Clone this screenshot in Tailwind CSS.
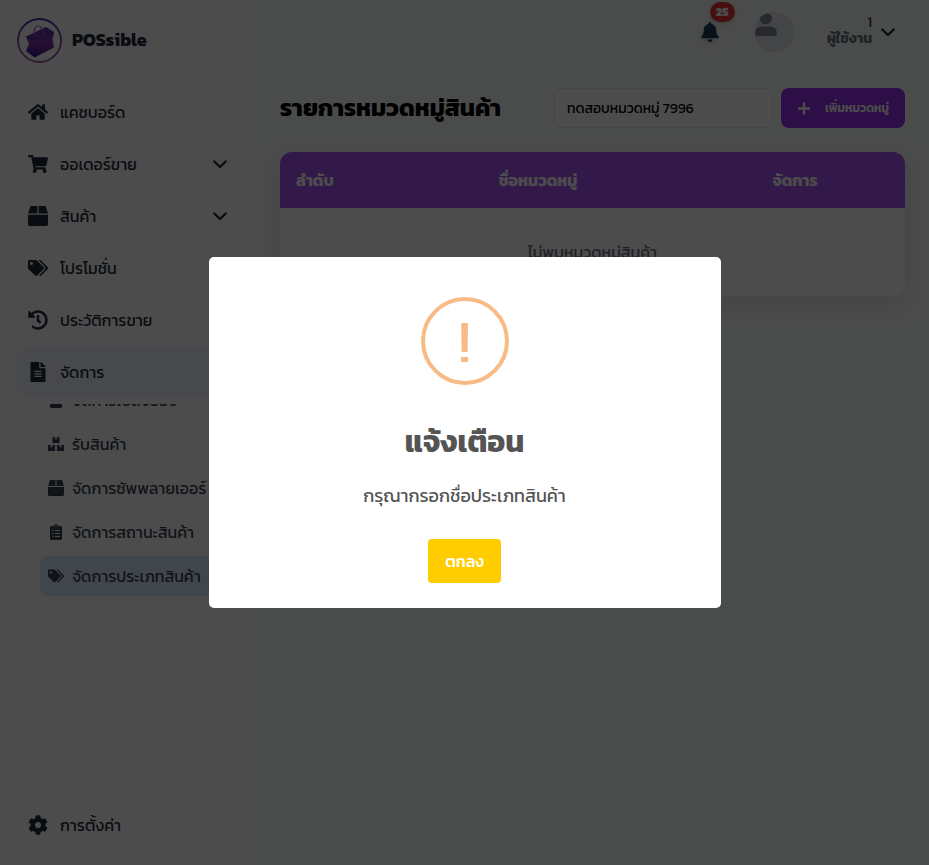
<!DOCTYPE html>
<html lang="th">
<head>
<meta charset="utf-8">
<title>POSsible</title>
<script src="https://cdn.jsdelivr.net/npm/@tailwindcss/browser@4"></script>
</head>
<body class="h-[865px] w-[929px] overflow-hidden font-['Kanit','Open_Sans','Noto_Sans',sans-serif] text-base text-gray-800">
<svg class="hidden">
  <symbol id="home" viewBox="0 0 576 512"><path d="M280.37 148.26L96 300.11V464a16 16 0 0 0 16 16l112.06-.29a16 16 0 0 0 15.92-16V368a16 16 0 0 1 16-16h64a16 16 0 0 1 16 16v95.64a16 16 0 0 0 16 16.05L464 480a16 16 0 0 0 16-16V300L295.67 148.26a12.19 12.19 0 0 0-15.3 0zM571.6 251.47L488 182.56V44.05a12 12 0 0 0-12-12h-56a12 12 0 0 0-12 12v72.61L318.47 43a48 48 0 0 0-61 0L4.34 251.47a12 12 0 0 0-1.6 16.9l25.5 31A12 12 0 0 0 45.15 301l235.22-193.74a12.19 12.19 0 0 1 15.3 0L530.9 301a12 12 0 0 0 16.9-1.6l25.5-31a12 12 0 0 0-1.7-16.93z"/></symbol>
  <symbol id="cart" viewBox="0 0 576 512"><path d="M528.12 301.319l47.273-208C578.806 78.301 567.391 64 551.99 64H159.208l-9.166-44.81C147.758 8.021 137.93 0 126.529 0H24C10.745 0 0 10.745 0 24v16c0 13.255 10.745 24 24 24h69.883l70.248 343.435C147.325 417.1 136 435.222 136 456c0 30.928 25.072 56 56 56s56-25.072 56-56c0-15.674-6.447-29.835-16.824-40h209.647C430.447 426.165 424 440.326 424 456c0 30.928 25.072 56 56 56s56-25.072 56-56c0-22.172-12.888-41.332-31.579-50.405l5.517-24.276c3.413-15.018-8.002-29.319-23.403-29.319H218.117l-6.545-32h293.145c11.206 0 20.92-7.754 23.403-18.681z"/></symbol>
  <symbol id="box" viewBox="0 0 512 512"><path d="M509.5 184.6L458.9 32.8C452.4 13.2 434.1 0 413.4 0H272v192h238.7c-.4-2.5-.4-5-1.2-7.4zM240 0H98.6c-20.7 0-39 13.2-45.5 32.8L2.5 184.6c-.8 2.4-.8 4.9-1.2 7.4H240V0zM0 224v240c0 26.5 21.5 48 48 48h416c26.5 0 48-21.5 48-48V224H0z"/></symbol>
  <symbol id="tags" viewBox="0 0 640 512"><path d="M497.941 225.941L286.059 14.059A48 48 0 0 0 252.118 0H48C21.49 0 0 21.49 0 48v204.118a48 48 0 0 0 14.059 33.941l211.882 211.882c18.744 18.745 49.136 18.746 67.882 0l204.118-204.118c18.745-18.745 18.745-49.137 0-67.882zM112 160c-26.51 0-48-21.49-48-48s21.49-48 48-48 48 21.49 48 48-21.49 48-48 48zm513.941 133.823L421.823 497.941c-18.745 18.745-49.137 18.745-67.882 0l-.36-.36L527.64 323.522c16.999-16.999 26.36-39.6 26.36-63.64s-9.362-46.641-26.36-63.64L331.397 0h48.721a48 48 0 0 1 33.941 14.059l211.882 211.882c18.745 18.745 18.745 49.137 0 67.882z"/></symbol>
  <symbol id="history" viewBox="0 0 512 512"><path d="M504 255.531c.253 136.64-111.18 248.372-247.82 248.468-59.015.042-113.223-20.53-155.822-54.911-11.077-8.94-11.905-25.541-1.839-35.607l11.267-11.267c8.609-8.609 22.353-9.551 31.891-1.984C173.062 425.135 212.781 440 256 440c101.705 0 184-82.311 184-184 0-101.705-82.311-184-184-184-48.814 0-93.149 18.969-126.068 49.932l50.754 50.754c10.08 10.08 2.941 27.314-11.313 27.314H24c-8.837 0-16-7.163-16-16V38.627c0-14.254 17.234-21.393 27.314-11.314l49.372 49.372C129.209 34.136 189.552 8 256 8c136.81 0 247.747 110.78 248 247.531zm-180.912 78.784l9.823-12.63c8.138-10.463 6.253-25.542-4.21-33.679L288 256.349V152c0-13.255-10.745-24-24-24h-16c-13.255 0-24 10.745-24 24v135.651l65.409 50.874c10.463 8.137 25.541 6.253 33.679-4.21z"/></symbol>
  <symbol id="file" viewBox="0 0 384 512"><path d="M224 136V0H24C10.7 0 0 10.7 0 24v464c0 13.3 10.7 24 24 24h336c13.3 0 24-10.7 24-24V160H248c-13.2 0-24-10.8-24-24zm64 236c0 6.6-5.4 12-12 12H108c-6.6 0-12-5.4-12-12v-8c0-6.6 5.4-12 12-12h168c6.6 0 12 5.4 12 12v8zm0-64c0 6.6-5.4 12-12 12H108c-6.6 0-12-5.4-12-12v-8c0-6.6 5.4-12 12-12h168c6.6 0 12 5.4 12 12v8zm0-72v8c0 6.6-5.4 12-12 12H108c-6.6 0-12-5.4-12-12v-8c0-6.6 5.4-12 12-12h168c6.6 0 12 5.4 12 12zm96-114.1v6.1H256V0h6.1c6.4 0 12.5 2.5 17 7l97.9 98c4.5 4.5 7 10.6 7 16.9z"/></symbol>
  <symbol id="boxes" viewBox="0 0 576 512"><path d="M560 288h-80v96l-32-21.3-32 21.3v-96h-80c-8.8 0-16 7.2-16 16v192c0 8.8 7.2 16 16 16h224c8.8 0 16-7.2 16-16V304c0-8.8-7.2-16-16-16zm-384-64h224c8.8 0 16-7.2 16-16V16c0-8.8-7.2-16-16-16h-80v96l-32-21.3L256 96V0h-80c-8.8 0-16 7.2-16 16v192c0 8.8 7.2 16 16 16zm64 64h-80v96l-32-21.3L96 384v-96H16c-8.8 0-16 7.2-16 16v192c0 8.8 7.2 16 16 16h224c8.8 0 16-7.2 16-16V304c0-8.8-7.2-16-16-16z"/></symbol>
  <symbol id="clip" viewBox="0 0 384 512"><path d="M336 64h-80c0-35.3-28.7-64-64-64s-64 28.7-64 64H48C21.5 64 0 85.5 0 112v352c0 26.5 21.5 48 48 48h288c26.5 0 48-21.5 48-48V112c0-26.5-21.5-48-48-48zM96 424c-13.3 0-24-10.7-24-24s10.7-24 24-24 24 10.7 24 24-10.7 24-24 24zm0-96c-13.3 0-24-10.7-24-24s10.7-24 24-24 24 10.7 24 24-10.7 24-24 24zm0-96c-13.3 0-24-10.7-24-24s10.7-24 24-24 24 10.7 24 24-10.7 24-24 24zm96-192c13.3 0 24 10.7 24 24s-10.7 24-24 24-24-10.7-24-24 10.7-24 24-24zm128 368c0 4.4-3.6 8-8 8H168c-4.4 0-8-3.6-8-8v-16c0-4.4 3.6-8 8-8h144c4.4 0 8 3.6 8 8v16zm0-96c0 4.4-3.6 8-8 8H168c-4.4 0-8-3.6-8-8v-16c0-4.4 3.6-8 8-8h144c4.4 0 8 3.6 8 8v16zm0-96c0 4.4-3.6 8-8 8H168c-4.4 0-8-3.6-8-8v-16c0-4.4 3.6-8 8-8h144c4.4 0 8 3.6 8 8v16z"/></symbol>
  <symbol id="cog" viewBox="0 0 512 512"><path d="M487.4 315.7l-42.6-24.6c4.3-23.2 4.3-47 0-70.2l42.6-24.6c4.9-2.8 7.1-8.6 5.5-14-11.1-35.6-30-67.8-54.7-94.6-3.8-4.1-10-5.1-14.8-2.3L380.8 110c-17.9-15.4-38.5-27.3-60.8-35.1V25.8c0-5.6-3.9-10.5-9.4-11.7-36.7-8.2-74.3-7.8-109.2 0-5.5 1.2-9.4 6.1-9.4 11.7V75c-22.2 7.9-42.8 19.8-60.8 35.1L88.7 85.5c-4.9-2.8-11-1.9-14.8 2.3-24.7 26.7-43.6 58.9-54.7 94.6-1.7 5.4.6 11.2 5.5 14L67.3 221c-4.3 23.2-4.3 47 0 70.2l-42.6 24.6c-4.9 2.8-7.1 8.6-5.5 14 11.1 35.6 30 67.8 54.7 94.6 3.8 4.1 10 5.1 14.8 2.3l42.6-24.6c17.9 15.4 38.5 27.3 60.8 35.1v49.2c0 5.6 3.9 10.5 9.4 11.7 36.7 8.2 74.3 7.8 109.2 0 5.5-1.2 9.4-6.1 9.4-11.7v-49.2c22.2-7.9 42.8-19.8 60.8-35.1l42.6 24.6c4.9 2.8 11 1.9 14.8-2.3 24.7-26.7 43.6-58.9 54.7-94.6 1.5-5.5-.7-11.3-5.6-14.1zM256 336c-44.1 0-80-35.9-80-80s35.9-80 80-80 80 35.9 80 80-35.9 80-80 80z"/></symbol>
  <symbol id="bell" viewBox="0 0 448 512"><path d="M224 512c35.32 0 63.97-28.65 63.97-64H160.03c0 35.35 28.65 64 63.97 64zm215.39-149.71c-19.32-20.76-55.47-51.99-55.47-154.29 0-77.7-54.48-139.9-127.94-155.16V32c0-17.67-14.32-32-31.98-32s-31.98 14.33-31.98 32v20.84C118.56 68.1 64.08 130.3 64.08 208c0 102.3-36.15 133.53-55.47 154.29-6 6.45-8.66 14.16-8.61 21.71.11 16.4 12.98 32 32.1 32h383.8c19.12 0 32-15.6 32.1-32 .05-7.55-2.61-15.27-8.61-21.71z"/></symbol>
  <symbol id="chev" viewBox="0 0 14 9"><path d="M1.3 1.5 7 7l5.7-5.5" fill="none" stroke="currentColor" stroke-width="2.3" stroke-linecap="round" stroke-linejoin="round"/></symbol>
</svg>
<div class="flex h-full">
  <aside class="flex w-64 shrink-0 flex-col bg-white px-4">
    <div class="flex h-20 items-center gap-2.5">
      <svg class="ml-px size-[45px]" viewBox="0 0 45 45">
        <defs>
          <linearGradient id="ring" x1="0" y1="0" x2="0" y2="1"><stop offset="0" stop-color="#4c2fb0"/><stop offset="1" stop-color="#a858b0"/></linearGradient>
          <linearGradient id="bag" x1="0" y1="0" x2="0" y2="1"><stop offset="0" stop-color="#5a2ba8"/><stop offset=".5" stop-color="#8038a8"/><stop offset="1" stop-color="#32109a"/></linearGradient>
        </defs>
        <circle cx="22.5" cy="22.5" r="21.500" fill="none" stroke="url(#ring)" stroke-width="1.8"/>
        <path d="M9 18.5 29 9l8 5-1.5 7.500 1.500 8L17.500 39.500 9 33l3-7z" fill="url(#bag)"/>
        <path d="M9 18.5 17 21.500 37 14" fill="none" stroke="#4a1c90" stroke-width=".8"/>
        <path d="M17.5 17c-2-12 8-13 9.500 1" fill="none" stroke="#a060b0" stroke-width="1.2"/>
      </svg>
      <span class="text-lg font-bold">POSsible</span>
    </div>
    <nav class="flex flex-col gap-1 pt-2">
      <a class="flex h-12 items-center gap-3 pl-3"><svg class="size-5 fill-current"><use href="#home"/></svg>แคชบอร์ด</a>
      <a class="flex h-12 items-center gap-3 px-3"><svg class="size-5 fill-current"><use href="#cart"/></svg>ออเดอร์ขาย<svg class="mr-px ml-auto h-[9px] w-3.5"><use href="#chev"/></svg></a>
      <a class="flex h-12 items-center gap-3 px-3"><svg class="size-5 fill-current"><use href="#box"/></svg>สินค้า<svg class="mr-px ml-auto h-[9px] w-3.5"><use href="#chev"/></svg></a>
      <a class="flex h-12 items-center gap-3 pl-3"><svg class="size-5 fill-current"><use href="#tags"/></svg>โปรโมชั่น</a>
      <a class="flex h-12 items-center gap-3 pl-3"><svg class="size-5 fill-current"><use href="#history"/></svg>ประวัติการขาย</a>
      <a class="flex h-12 items-center gap-3 rounded-xl bg-blue-50 pl-3"><svg class="size-5 fill-current"><use href="#file"/></svg>จัดการ</a>
    </nav>
    <div class="mt-2 flex h-48 flex-col justify-end gap-1 overflow-hidden pl-6 text-gray-700">
      <a class="flex h-10 shrink-0 items-center gap-2 pl-2"><svg class="size-4 fill-current" viewBox="0 0 16 16"><path d="M3 0h10l1 1v14l-1 1H3l-1-1V1z"/></svg>จัดการเบิลจของ</a>
      <a class="flex h-10 shrink-0 items-center gap-2 pl-2"><svg class="size-4 fill-current"><use href="#boxes"/></svg>รับสินค้า</a>
      <a class="flex h-10 shrink-0 items-center gap-2 pl-2"><svg class="size-4 fill-current"><use href="#box"/></svg>จัดการซัพพลายเออร์</a>
      <a class="flex h-10 shrink-0 items-center gap-2 pl-2"><svg class="size-4 fill-current"><use href="#clip"/></svg>จัดการสถานะสินค้า</a>
      <a class="flex h-10 shrink-0 items-center gap-2 rounded-lg bg-blue-100 pl-2"><svg class="size-4 fill-current"><use href="#tags"/></svg>จัดการประเภทสินค้า</a>
    </div>
    <a class="mt-auto mb-4 flex h-12 items-center gap-3 pl-3"><svg class="size-5 fill-current"><use href="#cog"/></svg>การตั้งค่า</a>
  </aside>
  <main class="flex-1 bg-[#f8fdfa] px-6">
    <header class="flex h-16 items-center justify-end">
      <div class="relative mr-[35px] drop-shadow-md">
        <svg class="h-5 w-[18px] fill-[#1f3a5a]"><use href="#bell"/></svg>
        <span class="absolute -top-5 left-[9px] flex h-5 w-[25px] items-center justify-center rounded-full bg-[#e53935] text-xs font-black text-white">25</span>
      </div>
      <svg class="size-10" viewBox="0 0 40 40">
        <circle cx="20" cy="20" r="20" fill="#e5e7eb"/>
        <path d="M5.5 6Q7 3.5 13.5 1.2q4 .8 4.5 5A6 6 0 1 1 5.500 6zM1 21.500q0-7 7-7h8q7 0 7 7 0 2.500-2.500 2.500h-17Q1 24 1 21.500z" fill="#858b96"/>
      </svg>
      <div class="ml-[33px] flex flex-col items-end pb-[3px]">
        <span class="text-sm/[17px]">1</span>
        <span class="text-sm/4 font-bold text-gray-500">ผู้ใช้งาน</span>
      </div>
      <svg class="mr-2.5 ml-[9px] h-[9px] w-3.5"><use href="#chev"/></svg>
    </header>
    <div class="mt-6 flex h-10 items-center gap-2">
      <h1 class="text-2xl font-bold text-black">รายการหมวดหมู่สินค้า</h1>
      <div class="ml-auto flex h-10 w-[219px] items-center rounded-lg border border-gray-200 bg-white px-3 pt-0.5 text-sm text-black">ทดสอบหมวดหมู่ 7996</div>
      <div class="flex h-10 w-[124px] items-center justify-between rounded-lg bg-[#9630ee] px-4 text-xs font-semibold text-white"><svg class="size-3.5" viewBox="0 0 14 14"><path d="M7 2.500v10M2 7.500h10" stroke="currentColor" stroke-width="2.400" stroke-linecap="round"/></svg>เพิ่มหมวดหมู่</div>
    </div>
    <section class="mt-6 overflow-hidden rounded-xl bg-white shadow-[0_8px_24px_rgba(0,0,0,0.1)]">
      <div class="grid h-14 grid-cols-[111px_294px_220px] items-center bg-[#ab55f5] font-bold text-white">
        <span class="pl-4">ลำดับ</span><span class="text-center">ชื่อหมวดหมู่</span><span class="text-center">จัดการ</span>
      </div>
      <div class="flex h-[88px] items-center justify-center text-gray-500">ไม่พบหมวดหมู่สินค้า</div>
    </section>
  </main>
</div>
<div class="fixed inset-0 flex items-center justify-center bg-black/70">
  <div class="flex h-[351px] w-[512px] flex-col items-center rounded-[5px] bg-white pt-10 text-[#545454]">
    <div class="flex size-[88px] items-center justify-center rounded-full border-4 border-[#f8bb86] text-[60px]/none text-[#f8bb86]">!</div>
    <h2 class="mt-[34px] text-3xl/[45px] font-bold">แจ้งเตือน</h2>
    <p class="mt-[18px] text-lg/[27px]">กรุณากรอกชื่อประเภทสินค้า</p>
    <div class="mt-[30px] flex h-11 w-[73px] items-center justify-center rounded-[4px] bg-[#fc0] font-medium text-white">ตกลง</div>
  </div>
</div>
</body>
</html>
